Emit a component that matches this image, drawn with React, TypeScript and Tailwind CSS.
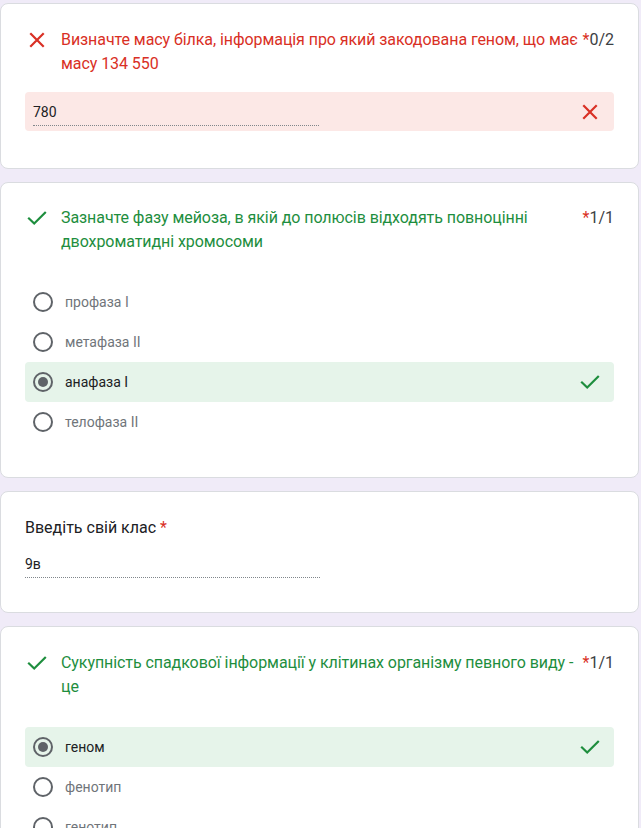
import React from "react";

const XIcon = ({ className = "" }: { className?: string }) => (
  <svg viewBox="0 0 24 24" className={className} fill="none" stroke="currentColor" strokeWidth="2.4" strokeLinecap="square">
    <path d="M5.5 5.5 L18.5 18.5 M18.5 5.5 L5.5 18.5" />
  </svg>
);

const CheckIcon = ({ className = "" }: { className?: string }) => (
  <svg viewBox="0 0 24 24" className={className} fill="none" stroke="currentColor" strokeWidth="2.2" strokeLinecap="square">
    <path d="M4 12.5 L9.2 17.5 L20 6.8" />
  </svg>
);

const Radio = ({ checked }: { checked?: boolean }) => (
  <div className="w-5 h-5 rounded-full border-2 border-[#5f6368] flex items-center justify-center shrink-0">
    {checked && <div className="w-[10px] h-[10px] rounded-full bg-[#5f6368]" />}
  </div>
);

const Option = ({ label, correct }: { label: string; correct?: boolean }) => (
  <div
    className={`h-10 flex items-center pl-2 pr-3 rounded ${correct ? "bg-[#e6f4ea]" : ""}`}
  >
    <Radio checked={correct} />
    <span className={`ml-[12px] text-[14px] ${correct ? "text-[#202124]" : "text-[#70757a]"}`}>{label}</span>
    {correct && <CheckIcon className="ml-auto w-6 h-6 text-[#1e8e3e]" />}
  </div>
);

const Title = ({
  text,
  status,
  score,
}: {
  text: string;
  status: "ok" | "bad";
  score: string;
}) => (
  <div className="flex items-start">
    <div className="w-9 h-6 flex items-center shrink-0">
      {status === "bad" ? (
        <XIcon className="w-[22px] h-[22px] text-[#d93025] ml-[1px]" />
      ) : (
        <CheckIcon className="w-[24px] h-[24px] text-[#1e8e3e] ml-[0px]" />
      )}
    </div>
    <div
      className={`flex-1 text-[16px] leading-6 tracking-[-0.07px] ${status === "bad" ? "text-[#d93025]" : "text-[#1e8e3e]"}`}
    >
      {text}
    </div>
    <div className="shrink-0 -ml-[4px] text-[16px] leading-6 text-[#3c4043] whitespace-nowrap">
      <span className="text-[#d93025]">*</span>
      {score}
    </div>
  </div>
);

const Card = ({ children, className = "" }: { children: React.ReactNode; className?: string }) => (
  <div className={`bg-white rounded-lg border border-[#dadce0] w-[639px] px-6 shrink-0 ${className}`}>{children}</div>
);

export default function App() {
  return (
    <div
      className="h-[828px] bg-[#f0ebf8] pt-[3px] flex flex-col gap-[13px] overflow-hidden"
      style={{ fontFamily: "Roboto, 'Noto Sans', sans-serif" }}
    >
      <Card className="pt-6 h-[166px]">
        <Title
          status="bad"
          score="0/2"
          text="Визначте масу білка, інформація про який закодована геном, що має масу 134 550"
        />
        <div className="mt-[16px] h-[39px] bg-[#fce8e6] rounded flex items-center pl-2 pr-3">
          <div className="w-[286px] border-b border-dotted border-[#80868b] pt-[3px] pb-[1px]">
            <span className="text-[14px] text-[#202124]">780</span>
          </div>
          <XIcon className="ml-auto w-[22px] h-[22px] text-[#d93025] mr-[1px]" />
        </div>
      </Card>

      <Card className="pt-[23px] h-[296px]">
        <Title
          status="ok"
          score="1/1"
          text="Зазначте фазу мейоза, в якій до полюсів відходять повноцінні двохроматидні хромосоми"
        />
        <div className="mt-7 flex flex-col">
          <Option label="профаза I" />
          <Option label="метафаза II" />
          <Option label="анафаза I" correct />
          <Option label="телофаза II" />
        </div>
      </Card>

      <Card className="pt-6 h-[122px]">
        <div className="text-[16px] leading-6 text-[#202124]">
          Введіть свій клас <span className="text-[#d93025]">*</span>
        </div>
        <div className="mt-[12px] w-[295px] border-b border-dotted border-[#80868b] pb-[1px]">
          <span className="text-[14px] text-[#202124]">9в</span>
        </div>
      </Card>

      <Card className="pt-6 pb-9">
        <Title
          status="ok"
          score="1/1"
          text="Сукупність спадкової інформації у клітинах організму певного виду - це"
        />
        <div className="mt-[28px] flex flex-col">
          <Option label="геном" correct />
          <Option label="фенотип" />
          <Option label="генотип" />
        </div>
      </Card>
    </div>
  );
}
